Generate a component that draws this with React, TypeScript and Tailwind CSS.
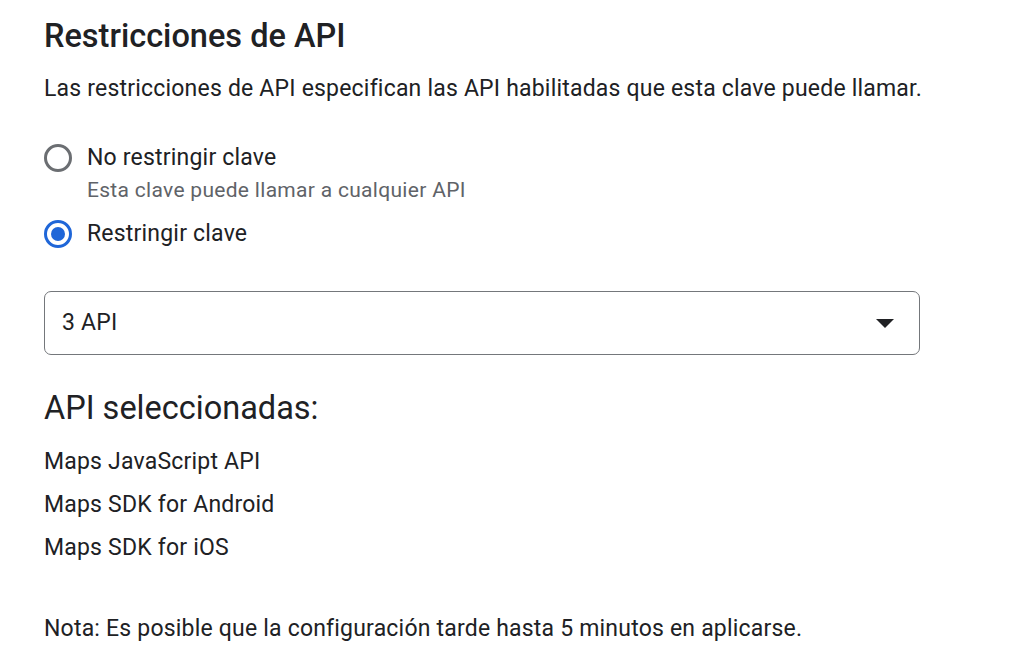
import { useState } from 'react';

const apis = ['Maps JavaScript API', 'Maps SDK for Android', 'Maps SDK for iOS'];

function Radio({ checked }: { checked: boolean }) {
    return (
        <span
            className={`flex items-center justify-center w-[28px] h-[28px] rounded-full border-[3px] shrink-0 ${
                checked ? 'border-[#1f66d8]' : 'border-[#6b6e72]'
            }`}
        >
            {checked && <span className="w-[14px] h-[14px] rounded-full bg-[#1f66d8]" />}
        </span>
    );
}

export default function App() {
    const [restricted, setRestricted] = useState(true);

    return (
        <div className="bg-white min-h-[648px] pl-[44px] pt-[17px] text-[#202124] font-['Roboto',sans-serif] text-[23px] leading-[28px] tracking-[0.2px]">
            {/* Header */}
            <h1 className="text-[32.5px] leading-[38px] font-medium tracking-normal">Restricciones de API</h1>
            <p className="mt-[20px]">
                Las restricciones de API especifican las API habilitadas que esta clave puede llamar.
            </p>

            {/* Options */}
            <div className="mt-[41px] flex flex-col">
                <button className="flex items-center gap-[15px] text-left" onClick={() => setRestricted(false)}>
                    <Radio checked={!restricted} />
                    <span>No restringir clave</span>
                </button>
                <p className="ml-[43px] mt-[5px] text-[21px] leading-[26px] tracking-[0.3px] text-[#5f6368]">
                    Esta clave puede llamar a cualquier API
                </p>
                <button className="mt-[17px] flex items-center gap-[15px] text-left" onClick={() => setRestricted(true)}>
                    <Radio checked={restricted} />
                    <span>Restringir clave</span>
                </button>
            </div>

            {/* Select */}
            <div className="mt-[43px] w-[876px] h-[64px] border border-[#74777b] rounded-[7px] flex items-center justify-between pl-[17px] pr-[25px]">
                <span>3 API</span>
                <svg width="18" height="9" viewBox="0 0 18 9">
                    <path d="M0 0h18L9 9z" fill="#202124" />
                </svg>
            </div>

            {/* Selected */}
            <h2 className="mt-[34px] text-[32.5px] leading-[38px] tracking-normal">API seleccionadas:</h2>
            <ul className="mt-[21px] flex flex-col gap-[15px]">
                {apis.map((a) => (
                    <li key={a}>{a}</li>
                ))}
            </ul>

            <p className="mt-[53px]">
                Nota: Es posible que la configuración tarde hasta 5 minutos en aplicarse.
            </p>
        </div>
    );
}
